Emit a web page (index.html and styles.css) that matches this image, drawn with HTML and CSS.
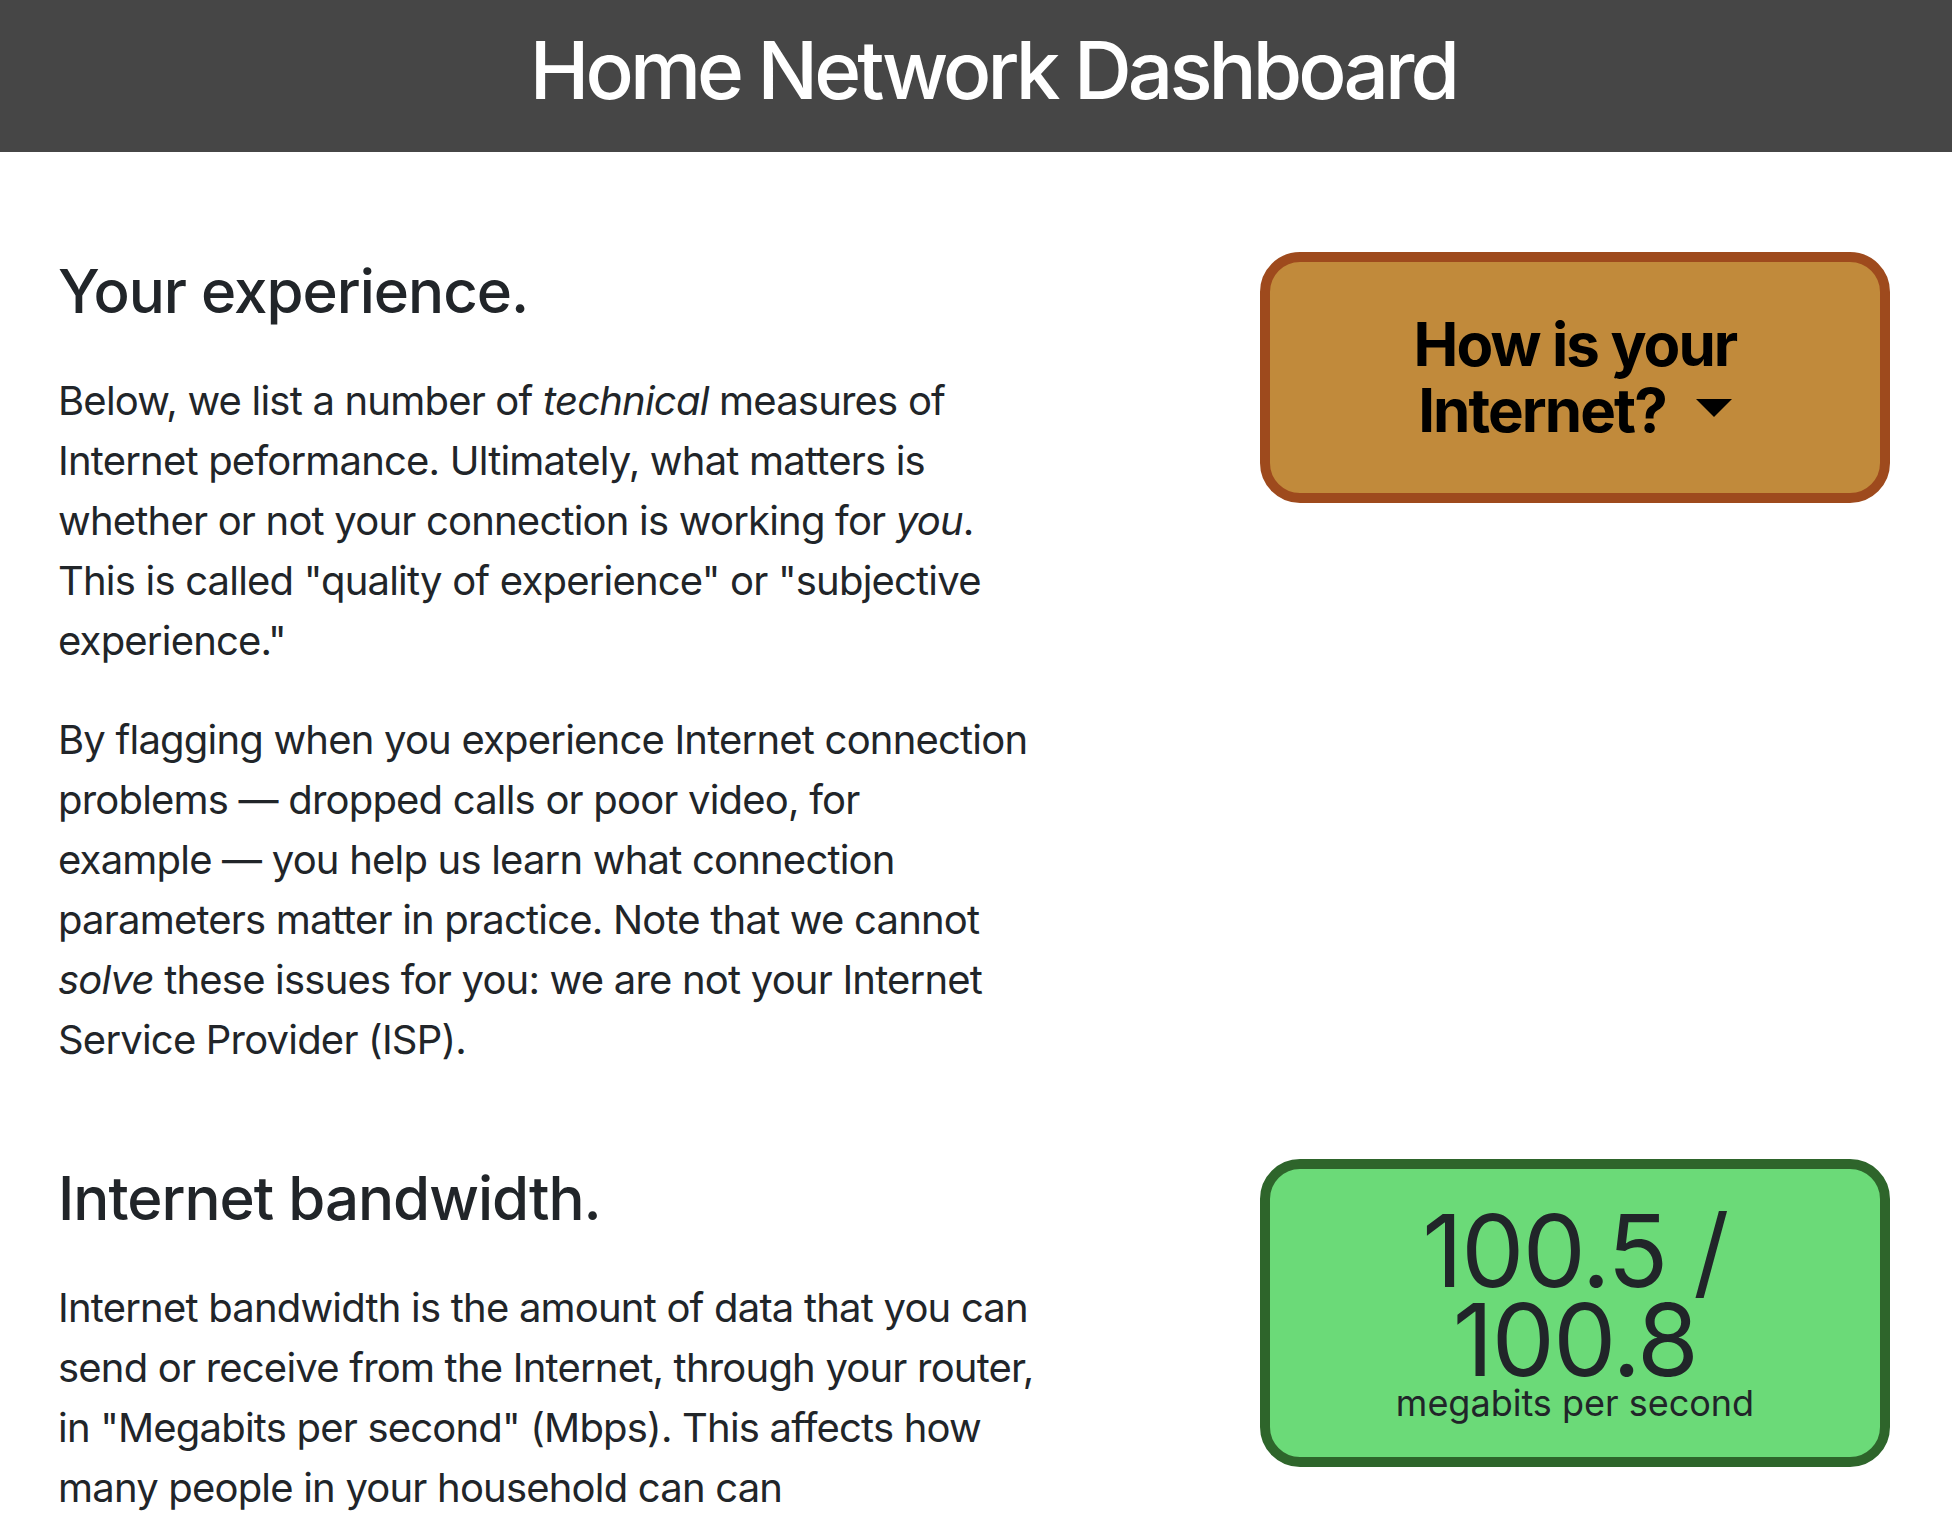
FILE: index.html
```html
<!DOCTYPE html>
<html lang="en">
<head>
<meta charset="utf-8">
<title>Home Network Dashboard</title>
<link rel="stylesheet" href="styles.css">
</head>
<body>
<header class="topbar">
  <h1 class="topbar-title">Home Network Dashboard</h1>
</header>
<main class="content">
  <section class="row">
    <div class="text-col">
      <h2 class="section-title">Your experience.</h2>
      <p>Below, we list a number of <em>technical</em> measures of Internet peformance. Ultimately, what matters is whether or not your connection is working for <em>you</em>. This is called "quality of experience" or "subjective experience."</p>
      <p>By flagging when you experience Internet connection problems&nbsp;— dropped calls or poor video, for example&nbsp;— you help us learn what connection parameters matter in practice. Note that we cannot <em>solve</em> these issues for you: we are not your Internet Service Provider (ISP).</p>
    </div>
    <div class="side-col">
      <div class="tile tile-qoe">
        <button class="qoe-toggle" type="button">How is your Internet?<span class="caret"></span></button>
      </div>
    </div>
  </section>
  <section class="row">
    <div class="text-col">
      <h2 class="section-title">Internet bandwidth.</h2>
      <p>Internet bandwidth is the amount of data that you can send or receive from the Internet, through your router, in "Megabits per second" (Mbps). This affects how many people in your household can can simultaneously stream video or make calls without problems.</p>
    </div>
    <div class="side-col">
      <div class="tile tile-good">
        <div class="metric-value">100.5 / 100.8</div>
        <div class="metric-unit">megabits per second</div>
      </div>
    </div>
  </section>
</main>
</body>
</html>
```
FILE: styles.css
```css
html, body {
  margin: 0;
  padding: 0;
  background: #ffffff;
}

body {
  font-family: Inter, "Liberation Sans", Arial, sans-serif;
  font-size: 40px;
  line-height: 60px;
  letter-spacing: -0.8px;
  color: #212529;
}

.topbar {
  background: #464646;
  padding: 22px 0 34px 34px;
  text-align: center;
}

.topbar-title {
  margin: 0;
  font-size: 80px;
  line-height: 96px;
  font-weight: 500;
  letter-spacing: -3.9px;
  color: #ffffff;
}

.content {
  display: flex;
  flex-direction: column;
  gap: 50px;
  padding: 100px 62px 0 58px;
}

.row {
  display: grid;
  grid-template-columns: 1000px 630px;
  justify-content: space-between;
  align-items: start;
}

.section-title {
  margin: 3px 0 44px;
  font-size: 60px;
  line-height: 72px;
  font-weight: 500;
  letter-spacing: -1px;
}

.text-col p {
  margin: 0 0 39px;
}

.tile {
  border: 10px solid;
  border-radius: 40px;
  text-align: center;
}

.tile-qoe {
  background: #c18a3b;
  border-color: #9e4a1d;
  padding: 49px 20px 45px;
}

.qoe-toggle {
  display: inline;
  background: none;
  border: 0;
  padding: 0;
  margin: 0;
  font-family: inherit;
  font-size: 60px;
  line-height: 66px;
  font-weight: 700;
  letter-spacing: -1.9px;
  color: #000000;
  cursor: pointer;
}

.caret {
  display: inline-block;
  margin-left: 30px;
  vertical-align: 15px;
  border-top: 18px solid #000000;
  border-left: 18px solid transparent;
  border-right: 18px solid transparent;
}

.tile-good {
  background: #6bda78;
  border-color: #2e652b;
  padding: 37px 40px 35px;
}

.metric-value {
  font-size: 100px;
  line-height: 89px;
  font-weight: 400;
  letter-spacing: -1.6px;
}

.metric-unit {
  font-size: 36px;
  line-height: 38px;
  letter-spacing: 0;
}
```
